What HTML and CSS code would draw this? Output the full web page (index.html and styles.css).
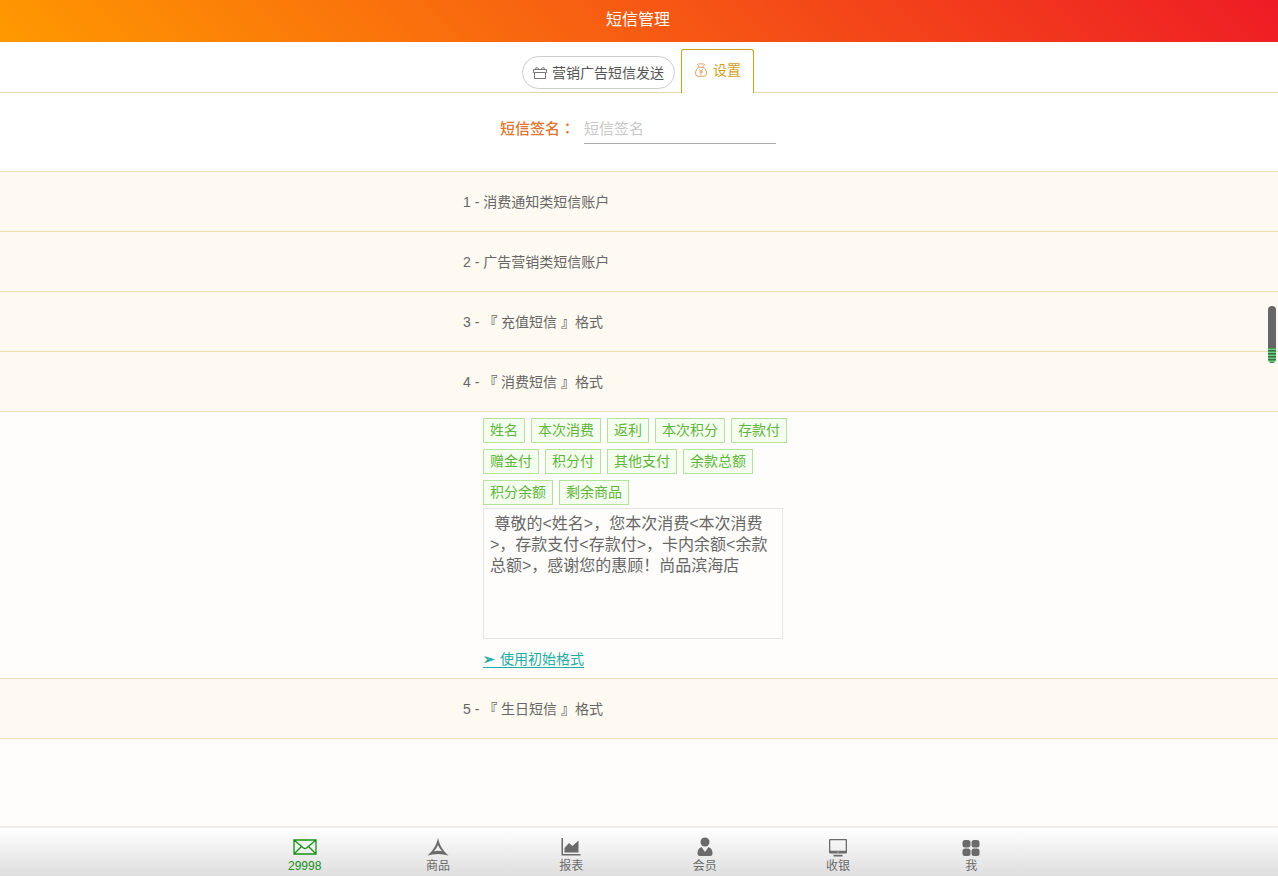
FILE: index.html
```html
<!DOCTYPE html>
<html lang="zh-CN">
<head>
<meta charset="utf-8">
<meta name="viewport" content="width=device-width, initial-scale=1">
<title>短信管理</title>
<link rel="stylesheet" href="styles.css">
</head>
<body>
<header class="header"><h1 class="title">短信管理</h1></header>

<div class="tabs">
  <button type="button" class="pill">
    <svg class="tab-icon gift" viewBox="0 0 14 14" fill="none" stroke="currentColor"><path d="M1.500 6.500V12.500H12.500V6.500M.5 3.500H13.500V6.500H.5ZM4 3.500C2 3 2.500 1 4 1.500L6.500 3.500M10 3.500C12 3 11.500 1 10 1.500L7.500 3.500"/></svg>
    <span>营销广告短信发送</span>
  </button>
  <button type="button" class="tab-active">
    <svg class="tab-icon money" viewBox="0 0 14 14" fill="none" stroke="currentColor"><path d="M5 3.800L3.500 1.500Q4.500 .2 5.500 1.200Q7 0 8.500 1.200Q9.500 .2 10.500 1.500L9 3.800M5 4.300C2.500 5.500 1.500 8 1.500 10.200Q1.500 13.300 4 13.300H10Q12.500 13.300 12.500 10.200C12.500 8 11.500 5.500 9 4.300ZM5.200 6.300L7 8.300L8.800 6.300M7 8.300V12M5.200 9H8.800"/></svg>
    <span>设置</span>
  </button>
</div>

<main class="main">
  <form class="sign">
    <label class="sign-label" for="sign">短信签名<span class="colon" lang="ja">：</span></label>
    <input class="sign-input" id="sign" type="text" placeholder="短信签名">
  </form>

  <section class="list">
    <button type="button" class="row"><span class="inner">1 - 消费通知类短信账户</span></button>
    <button type="button" class="row"><span class="inner">2 - 广告营销类短信账户</span></button>
    <button type="button" class="row"><span class="inner">3 - <b class="quote">『</b> 充值短信 <b class="quote">』</b>格式</span></button>
    <button type="button" class="row"><span class="inner">4 - <b class="quote">『</b> 消费短信 <b class="quote">』</b>格式</span></button>
    <div class="panel">
      <div class="inner panel-inner">
        <div class="tags">
          <button type="button" class="tag">姓名</button>
          <button type="button" class="tag">本次消费</button>
          <button type="button" class="tag">返利</button>
          <button type="button" class="tag">本次积分</button>
          <button type="button" class="tag">存款付</button>
          <button type="button" class="tag">赠金付</button>
          <button type="button" class="tag">积分付</button>
          <button type="button" class="tag">其他支付</button>
          <button type="button" class="tag">余款总额</button>
          <button type="button" class="tag">积分余额</button>
          <button type="button" class="tag">剩余商品</button>
        </div>
        <textarea class="message" aria-label="消费短信格式"> 尊敬的&lt;姓名&gt;，您本次消费&lt;本次消费&gt;，存款支付&lt;存款付&gt;，卡内余额&lt;余款总额&gt;，感谢您的惠顾！尚品滨海店</textarea>
        <a class="reset" href="#reset"><span class="arrow">➢</span>使用初始格式</a>
      </div>
    </div>
    <button type="button" class="row"><span class="inner">5 - <b class="quote">『</b> 生日短信 <b class="quote">』</b>格式</span></button>
  </section>
</main>

<nav class="nav">
  <div class="nav-inner">
    <a class="nav-item current" href="#sms">
      <svg class="nav-icon" viewBox="0 0 24 20" fill="none" stroke="currentColor" stroke-width="1.300"><path d="M1 3H23V17H1ZM1 3L10.500 11Q12 12 13.500 11L23 3M1 17L8.500 9.500M23 17L15.500 9.500"/></svg>
      <span>29998</span></a>
    <a class="nav-item" href="#goods">
      <svg class="nav-icon" viewBox="0 0 24 20" fill="currentColor" fill-rule="evenodd"><path d="M12 .5C13 7 16.500 13.500 22.500 18.500Q12 15.500 1.500 18.500C7.500 13.500 11 7 12 .5ZM12 8Q10.800 11.500 8 14.300Q12 13 16 14.300Q13.200 11.500 12 8Z"/></svg>
      <span>商品</span></a>
    <a class="nav-item" href="#report">
      <svg class="nav-icon" viewBox="0 0 24 20" fill="currentColor"><path d="M2.500 1H4V17H21.500V18.500H2.500ZM5.500 15.500V11L10 6L13.500 9L19.500 3.500V15.500Z"/></svg>
      <span>报表</span></a>
    <a class="nav-item" href="#members">
      <svg class="nav-icon" viewBox="0 0 24 20" fill="currentColor"><circle cx="12" cy="5" r="4.500"/><path d="M8.500 10L12 15L15.500 10Q19.500 11.500 19.500 16V17Q19.500 19 17 19H7Q4.500 19 4.500 17V16Q4.500 11.500 8.500 10Z"/></svg>
      <span>会员</span></a>
    <a class="nav-item" href="#cashier">
      <svg class="nav-icon" viewBox="0 0 24 20" fill="currentColor" fill-rule="evenodd"><path d="M4 2H20Q21 2 21 3V15.500Q21 16.500 20 16.500H4Q3 16.500 3 15.500V3Q3 2 4 2ZM4.300 3.300V13.700H19.700V3.300ZM11.300 14.700V15.500H12.700V14.700ZM7.500 17.800H16.500V19.500H7.500Z"/></svg>
      <span>收银</span></a>
    <a class="nav-item" href="#me">
      <svg class="nav-icon" viewBox="0 0 24 20" fill="currentColor"><rect x="3.500" y="3" width="8" height="7.500" rx="2.500"/><rect x="12.500" y="3" width="8" height="7.500" rx="2.500"/><rect x="3.500" y="11.500" width="8" height="7.500" rx="2.500"/><rect x="12.500" y="11.500" width="8" height="7.500" rx="2.500"/></svg>
      <span>我</span></a>
  </div>
</nav>
<div class="scroll-thumb"></div>
</body>
</html>
```

FILE: styles.css
```css
* { box-sizing: border-box; }

body {
  margin: 0;
  min-height: 100vh;
  display: flex;
  flex-direction: column;
  background: #fffdfb;
  color: #666;
  font: 14px/20px "Liberation Sans", "Noto Sans CJK SC", sans-serif;
}

button, input, textarea {
  font: inherit;
  color: inherit;
  margin: 0;
}

.header {
  padding: 9px 2px 11px 0;
  background: linear-gradient(45deg, #ff9900, #ee1c25);
  text-align: center;
}

.title {
  margin: 0;
  color: #fff;
  font-size: 16px;
  line-height: 22px;
  font-weight: 400;
}

.tabs {
  display: flex;
  justify-content: center;
  gap: 6px;
  padding: 7px 2px 0 0;
  background: #fff;
  border-bottom: 1px solid #e6d6ae;
}

.pill, .tab-active {
  display: flex;
  align-items: center;
  background: #fff;
}

.pill {
  gap: 5px;
  margin: 7px 0 3px;
  padding: 6px 10px;
  height: 33px;
  border: 1px solid #ccc;
  border-radius: 17px;
  color: #555;
}

.tab-active {
  gap: 5px;
  height: 44px;
  padding: 0 12px 3px;
  margin-bottom: -1px;
  border: 1px solid #c8a020;
  border-bottom: 0;
  border-radius: 3px 3px 0 0;
  color: #d2a01e;
}

.tab-icon { width: 14px; height: 14px; }
.gift { color: #777; }
.money { color: #dda068; }

.main { flex: 1; }

.sign {
  display: flex;
  justify-content: center;
  align-items: flex-start;
  gap: 9px;
  padding: 20px 2px 27px 0;
  background: #fff;
  font-size: 15px;
}

.sign-label {
  color: #e0752d;
  font-weight: 500;
  line-height: 31px;
}

.colon {
  font-family: "Noto Sans CJK JP", sans-serif;
  line-height: 15px;
}

.sign-input {
  width: 192px;
  height: 31px;
  padding: 0;
  border: 0;
  border-bottom: 1px solid #aaa;
  background: transparent;
  outline: 0;
}

.sign-input::placeholder { color: #c8c8c8; }

.list { border-top: 1px solid #f0deb4; }

.row {
  display: block;
  width: 100%;
  height: 60px;
  padding: 0;
  border: 0;
  border-bottom: 1px solid #f0deb4;
  background: #fffaf1;
  text-align: left;
}

.quote { font-weight: 700; }

.inner {
  display: block;
  width: 352px;
  max-width: 100%;
  margin: 0 auto;
}

.panel { border-bottom: 1px solid #f6dfc0; }

.panel-inner { padding: 6px 0 10px 20px; }

.tags {
  display: flex;
  flex-wrap: wrap;
  gap: 6px;
  margin-bottom: 3px;
}

.tag {
  height: 25px;
  padding: 0 6px 2px;
  border: 1px solid #b5e29a;
  background: #f5fff0;
  color: #62b43c;
  line-height: 20px;
}

.message {
  display: block;
  width: 300px;
  height: 131px;
  padding: 4px 6px;
  border: 1px solid #e4e4e4;
  background: transparent;
  font-size: 16px;
  line-height: 21px;
  resize: none;
  outline: 0;
}

.reset {
  display: block;
  width: fit-content;
  margin-top: 12px;
  border-bottom: 1px solid #22aca4;
  color: #22aca4;
  line-height: 16px;
  text-decoration: none;
}

.arrow {
  display: inline-block;
  width: 17px;
  font-weight: 700;
}

.nav {
  height: 50px;
  padding-right: 2px;
  border-top: 2px solid #f0eeec;
  background: linear-gradient(#fff, #dedede);
}

.nav-inner {
  display: flex;
  max-width: 800px;
  margin: 0 auto;
}

.nav-item {
  flex: 1;
  display: flex;
  flex-direction: column;
  align-items: center;
  padding-top: 9px;
  color: #6b6b6b;
  font-size: 12px;
  line-height: 19px;
  text-decoration: none;
}

.current { color: #189018; }

.nav-icon { width: 24px; height: 20px; }

.scroll-thumb {
  position: absolute;
  right: 2px;
  top: 306px;
  width: 8px;
  height: 57px;
  border-radius: 4px;
  background:
    repeating-linear-gradient(#3fa552 0 1px, #79c98a 1px 2px, #3c6b48 2px 3px) 0 100% / 100% 15px no-repeat,
    #666;
}
```
